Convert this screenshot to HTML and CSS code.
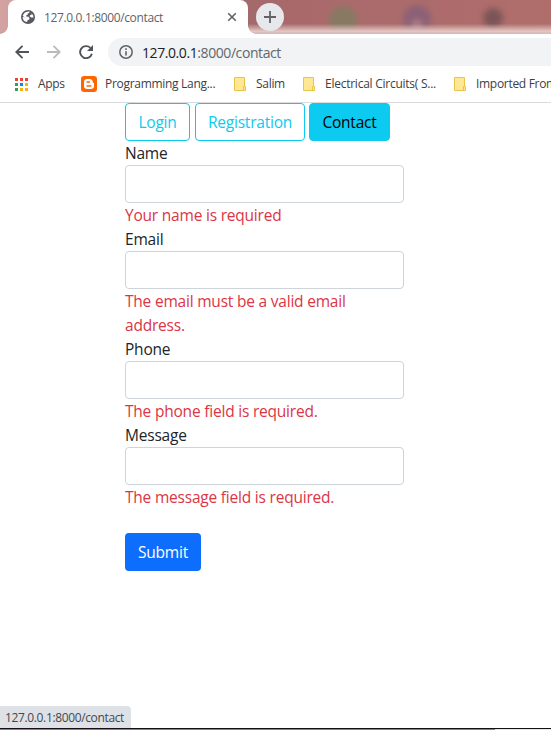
FILE: index.html
```
<!DOCTYPE html>
<html lang="en">
<head>
<meta charset="utf-8">
<title>127.0.0.1:8000/contact</title>
<link rel="stylesheet" href="styles.css">
</head>
<body>
<div class="window">
  <header class="tabstrip">
    <svg class="backdrop" width="551" height="34" viewBox="0 0 551 34" aria-hidden="true">
      <defs>
        <linearGradient id="wall"><stop offset="0" stop-color="#d3a3a2"/><stop offset=".1" stop-color="#c59090"/><stop offset=".44" stop-color="#a3696b"/><stop offset=".52" stop-color="#a9696b"/><stop offset="1" stop-color="#b06e6b"/></linearGradient>
        <linearGradient id="fade" x2="0" y2="1"><stop offset=".7" stop-color="#e9cdc9" stop-opacity="0"/><stop offset=".92" stop-color="#e7cbc7" stop-opacity=".95"/><stop offset="1" stop-color="#d8b4b0"/></linearGradient>
        <filter id="soft" x="-50%" y="-50%" width="200%" height="200%"><feGaussianBlur stdDeviation="3"/></filter>
      </defs>
      <rect width="551" height="34" fill="url(#wall)"/>
      <g filter="url(#soft)">
        <circle cx="343" cy="20" r="14" fill="#877962"/>
        <circle cx="417" cy="19" r="14" fill="#8b6176"/>
        <circle cx="417" cy="25" r="5" fill="#b48187"/>
        <circle cx="493" cy="18" r="10" fill="#7a5456"/>
      </g>
      <rect x="240" width="311" height="34" fill="url(#fade)"/>
    </svg>
    <div class="tab">
      <svg class="globe" width="14" height="14" viewBox="0 0 14 14"><circle cx="7" cy="7" r="7" fill="#565a5e"/><path d="M7.2 1.5 8.4 1.6 8.3 3 6.6 3.6 6.8 4.8 5 5.4 5.2 6.6 7.4 6.8 8.6 8.2 8 9.8 6.4 10.2 6.2 12C3.2 11.8 1.6 9.6 1.6 7L5 7.4 3.2 6.9 1.8 6C2.4 3.4 4.4 1.7 7.2 1.5ZM10.6 3.2 12.3 5.8 12.3 7.6 10.4 7.4 8.7 6.4 9 5.2 10.6 4.8Z" fill="#fff"/></svg>
      <span class="tab-title">127.0.0.1:8000/contact</span>
      <svg class="close" width="10" height="10" viewBox="0 0 10 10"><path d="m1.2 1.2 7.6 7.6m0-7.6-7.6 7.6" stroke="#5f6368" stroke-width="1.6"/></svg>
    </div>
    <div class="new-tab"><svg width="12" height="12" viewBox="0 0 12 12"><path d="M6 0v12M0 6h12" stroke="#5f6368" stroke-width="1.8"/></svg></div>
  </header>
  <nav class="toolbar">
    <svg width="14" height="14" viewBox="0 0 14 14" fill="none" stroke="#505458" stroke-width="1.9"><path d="M14 7H1.5M7.5.8 1.3 7l6.2 6.2"/></svg>
    <svg width="14" height="14" viewBox="0 0 14 14" fill="none" stroke="#b9bbbd" stroke-width="1.8"><path d="M0 7h12.5M6.5.8 12.7 7l-6.2 6.2"/></svg>
    <svg width="14" height="14" viewBox="0 0 14 14"><path d="M12.9 8.8A6 6 0 1 1 11.4 2.9" fill="none" stroke="#505458" stroke-width="1.9"/><path d="M14 0v6H8Z" fill="#505458"/></svg>
    <div class="address">
      <svg width="14" height="14" viewBox="0 0 14 14"><circle cx="7" cy="7" r="6.2" fill="none" stroke="#5f6368" stroke-width="1.5"/><path d="M7 6.2v4.3M7 3.3v1.6" stroke="#5f6368" stroke-width="1.6"/></svg>
      <span class="url"><b>127.0.0.1</b>:8000/contact</span>
    </div>
  </nav>
  <nav class="bookmarks">
    <svg class="apps-icon" width="13" height="13" viewBox="0 0 13 13"><path d="M0 0h3v3H0zM5 0h3v3H5zM10 0h3v3h-3z" fill="#ea4335"/><path d="M0 5h3v3H0zM0 10h3v3H0z" fill="#34a056"/><path d="M5 5h3v3H5z" fill="#1a80ed"/><path d="M10 5h3v3h-3zM10 10h3v3h-3zM5 10h3v3H5z" fill="#f9b208"/></svg>
    <span class="bm apps">Apps</span>
    <svg width="16" height="16" viewBox="0 0 16 16"><rect width="16" height="16" rx="3" fill="#ff6600"/><path d="M6.2 3h2.4C10.7 3 11.8 4.4 11.8 6c0 .8.3 1 1.2 1v2.8A3.2 3.2 0 0 1 9.8 13H6.2A3.2 3.2 0 0 1 3 9.8V6.2A3.2 3.2 0 0 1 6.2 3Z" fill="#fff"/><path d="M6.1 6h2.3M6.1 9.9h3.8" stroke="#ff6600" stroke-width="1.5" stroke-linecap="round"/></svg>
    <span class="bm programming">Programming Lang...</span>
    <svg width="12" height="14" viewBox="0 0 12 14"><path d="M.5.5h10v9h1v4H.5Z" fill="#ffe793" stroke="#e8c447"/><path d="M9.5 13V9.5h1" fill="none" stroke="#e8c447"/></svg>
    <span class="bm salim">Salim</span>
    <svg width="12" height="14" viewBox="0 0 12 14"><path d="M.5.5h10v9h1v4H.5Z" fill="#ffe793" stroke="#e8c447"/><path d="M9.5 13V9.5h1" fill="none" stroke="#e8c447"/></svg>
    <span class="bm circuits">Electrical Circuits( S...</span>
    <svg width="12" height="14" viewBox="0 0 12 14"><path d="M.5.5h10v9h1v4H.5Z" fill="#ffe793" stroke="#e8c447"/><path d="M9.5 13V9.5h1" fill="none" stroke="#e8c447"/></svg>
    <span class="bm imported">Imported From</span>
  </nav>
  <main class="page">
    <div class="links">
      <a class="btn login">Login</a>
      <a class="btn registration">Registration</a>
      <a class="btn active">Contact</a>
    </div>
    <form class="form">
      <label for="name">Name</label>
      <input id="name" type="text">
      <p class="error">Your name is required</p>
      <label for="email">Email</label>
      <input id="email" type="text">
      <p class="error">The email must be a valid email address.</p>
      <label for="phone">Phone</label>
      <input id="phone" type="text">
      <p class="error">The phone field is required.</p>
      <label for="message">Message</label>
      <input id="message" type="text">
      <p class="error">The message field is required.</p>
      <button class="submit" type="button">Submit</button>
    </form>
  </main>
  <footer class="bottom">
    <div class="status">127.0.0.1:8000/contact</div>
    <div class="edge"></div>
    <div class="taskbar"><i></i></div>
  </footer>
</div>
</body>
</html>
```
FILE: styles.css
```
* { box-sizing: border-box; }
body { margin: 0; background: #fff; font-family: "Open Sans", "Noto Sans", sans-serif; }
.window { width: 551px; height: 730px; display: flex; flex-direction: column; overflow: hidden; }
svg { display: block; flex: none; }

.tabstrip { position: relative; height: 34px; flex: none; display: flex; padding-left: 8px; }
.backdrop { position: absolute; inset: 0; }
.tab { position: relative; width: 240px; height: 34px; background: #fff; border-radius: 8px 8px 0 0; display: flex; align-items: center; padding: 0 12px 0 13px; }
.tab::before, .tab::after { content: ""; position: absolute; bottom: 0; width: 8px; height: 8px; }
.tab::before { left: -8px; background: radial-gradient(circle at 0 0, transparent 7.5px, #fff 8px); }
.tab::after { right: -8px; background: radial-gradient(circle at 100% 0, transparent 7.5px, #fff 8px); }
.tab-title { margin-left: 9px; flex: 1; font-size: 12px; letter-spacing: -.36px; color: #5f6368; white-space: nowrap; }
.close { margin-right: -1px; }
.new-tab { position: relative; margin: 3px 0 0 8px; width: 28px; height: 28px; border-radius: 50%; background: #e6e8eb; display: flex; align-items: center; justify-content: center; }

.toolbar { height: 36px; flex: none; display: flex; align-items: center; gap: 18px; padding-left: 15px; }
.address { flex: 1; height: 28px; margin-left: -3px; padding-left: 11px; border-radius: 14px 0 0 14px; background: #f1f3f4; display: flex; align-items: center; gap: 9px; }
.url { font-size: 14px; letter-spacing: -.42px; color: #63676b; white-space: nowrap; }
.url b { font-weight: 400; color: #202124; }

.bookmarks { height: 33px; flex: none; display: flex; align-items: center; padding: 0 0 4px 15px; border-bottom: 1px solid #d9dbdd; overflow: hidden; }
.bm { font-size: 12px; line-height: 16px; letter-spacing: -.3px; color: #3c4043; white-space: nowrap; flex: none; }
.apps { width: 43px; margin-left: 10px; }
.programming { width: 129px; margin-left: 8px; }
.salim { width: 47px; margin-left: 10px; }
.circuits { width: 129px; margin-left: 10px; letter-spacing: -.25px; }
.imported { margin-left: 10px; }

.page { flex: 1; padding-left: 125px; font-size: 15.5px; letter-spacing: -.21px; line-height: 24px; color: #212529; }
.links { display: flex; height: 38px; }
.btn { height: 38px; border: 1px solid #0dcaf0; border-radius: 4px; display: flex; align-items: center; justify-content: center; color: #0dcaf0; }
.login { width: 65px; margin-right: 5px; }
.registration { width: 110px; margin-right: 4px; }
.active { width: 81px; background: #0dcaf0; color: #000; }
.form { width: 279px; display: flex; flex-direction: column; }
.form input { height: 38px; width: 100%; border: 1px solid #ced4da; border-radius: 4px; background: #fff; outline: 0; padding: 6px 12px; font: inherit; }
.error { margin: 0; color: #dc3545; }
.submit { margin-top: 24px; width: 76px; height: 38px; border: 0; border-radius: 4px; background: #0d6efd; color: #fff; font: inherit; letter-spacing: inherit; padding: 0; }

.bottom { flex: none; display: flex; flex-direction: column; }
.status { width: 131px; height: 22px; padding-left: 5px; border-top-right-radius: 4px; background: #dee1e6; color: #44484c; font-size: 12px; line-height: 23px; letter-spacing: -.36px; white-space: nowrap; }
.edge { height: 1px; background: #151015; }
.taskbar { height: 1px; background: #e6e6e6; }
.taskbar i { display: block; width: 495px; height: 1px; background: #85808a; }
```
